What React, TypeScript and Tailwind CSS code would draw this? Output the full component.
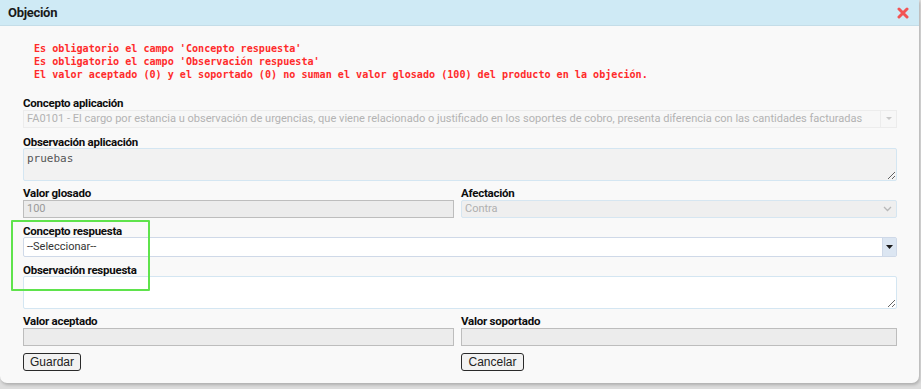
import React from 'react';

const errors = [
  "Es obligatorio el campo 'Concepto respuesta'",
  "Es obligatorio el campo 'Observación respuesta'",
  'El valor aceptado (0) y el soportado (0) no suman el valor glosado (100) del producto en la objeción.',
];

function Label({ children }: { children: React.ReactNode }) {
  return (
    <div className="h-[12px] text-[11.5px] leading-[12px] font-bold text-[#0d0d0d] tracking-[-0.25px]">{children}</div>
  );
}

function GreyInput({ value }: { value?: string }) {
  return (
    <div className="h-[18px] mt-[1px] bg-[#ececec] border border-[#bdbdbd] px-[3px] text-[11px] leading-[16px] text-[#9a9a9a]">
      {value}
    </div>
  );
}

function Button({ children, width }: { children: React.ReactNode; width: string }) {
  return (
    <button
      className={`${width} h-[18px] mt-[7px] border-[1.5px] border-[#2a2a2a] rounded-[3px] bg-[#f2f2f2] text-[12px] leading-[14px] text-[#222] font-['Liberation_Sans',Arial,sans-serif]`}
    >
      {children}
    </button>
  );
}

export default function App() {
  return (
    <div className="w-[921px] h-[389px] bg-[#dcdcdc] overflow-hidden font-['Roboto',sans-serif]">
      <div className="relative w-[919px] h-[383px] bg-[#f9f9f9] rounded-b-[7px] shadow-[1px_2px_3px_rgba(0,0,0,0.2)]">
        {/* header */}
        <div className="h-[26px] bg-[#cfeaf5] flex items-center justify-between pl-[8px] pr-[10px] border-b border-[#c4dde8]">
          <span className="text-[13px] font-bold text-[#1a1a1a] tracking-[-0.3px]">Objeción</span>
          <svg width="12" height="12" viewBox="0 0 12 12">
            <path d="M2 2 L10 10 M10 2 L2 10" stroke="#f25555" strokeWidth="3" strokeLinecap="round" />
          </svg>
        </div>

        {/* errors */}
        <div className="pl-[34px] pt-[16px] font-['DejaVu_Sans_Mono',monospace] text-[10.1px] leading-[13px] font-bold text-[#ff2b2b]">
          {errors.map((e) => (
            <div key={e} className="whitespace-pre">{e}</div>
          ))}
        </div>

        {/* form */}
        <div className="pl-[23px] pr-[22px] pt-[16px]">
          <Label>Concepto aplicación</Label>
          <div className="h-[18px] mt-[1px] flex bg-[#f7f7f7] border border-[#ececec]">
            <div className="flex-1 px-[3px] text-[11.05px] leading-[16px] text-[#b3b3b3] whitespace-nowrap overflow-hidden">
              FA0101 - El cargo por estancia u observación de urgencias, que viene relacionado o justificado en los soportes de cobro, presenta diferencia con las cantidades facturadas
            </div>
            <div className="w-[16px] border-l border-[#ececec] flex items-center justify-center">
              <svg width="6" height="4" viewBox="0 0 6 4">
                <path d="M0 0 L6 0 L3 3 Z" fill="#c8c8c8" />
              </svg>
            </div>
          </div>

          <div className="mt-[8px]">
            <Label>Observación aplicación</Label>
          </div>
          <textarea
            readOnly
            value="pruebas"
            className="block w-full h-[33px] bg-[#f2f2f2] border border-[#d4e6f2] rounded-[2px] px-[3px] py-[3px] font-['DejaVu_Sans_Mono',monospace] text-[11px] leading-[13px] text-[#555] outline-none"
          />

          <div className="grid grid-cols-[431px_436px] gap-x-[7px] mt-[6px]">
            <div>
              <Label>Valor glosado</Label>
              <GreyInput value="100" />
            </div>
            <div>
              <Label>Afectación</Label>
              <div className="h-[18px] mt-[1px] flex items-center justify-between bg-[#efefef] border border-[#d6e6f1] rounded-[2px] pl-[3px] pr-[4px] text-[11px] text-[#b0b0b0]">
                <span>Contra</span>
                <svg width="9" height="6" viewBox="0 0 9 6">
                  <path d="M1 1 L4.5 4.5 L8 1" stroke="#b8b8b8" strokeWidth="1.3" fill="none" />
                </svg>
              </div>
            </div>
          </div>

          <div className="mt-[7px]">
            <Label>Concepto respuesta</Label>
          </div>
          <div className="h-[20px] flex bg-white border border-[#cfd9e8] rounded-[2px]">
            <div className="flex-1 px-[3px] text-[11px] leading-[18px] text-[#333]">--Seleccionar--</div>
            <div className="w-[14px] bg-[#dce6f2] border-l border-[#cfd9e8] flex items-center justify-center">
              <svg width="7" height="4" viewBox="0 0 7 4">
                <path d="M0 0 L7 0 L3.5 4 Z" fill="#1a1a1a" />
              </svg>
            </div>
          </div>

          <div className="mt-[7px]">
            <Label>Observación respuesta</Label>
          </div>
          <textarea
            readOnly
            value=""
            className="block w-full h-[33px] bg-white border border-[#d4e6f2] rounded-[2px] px-[3px] py-[3px] text-[11px] outline-none"
          />

          <div className="grid grid-cols-[431px_436px] gap-x-[7px] mt-[6px]">
            <div>
              <Label>Valor aceptado</Label>
              <GreyInput />
              <Button width="w-[58px]">Guardar</Button>
            </div>
            <div>
              <Label>Valor soportado</Label>
              <GreyInput />
              <Button width="w-[63px]">Cancelar</Button>
            </div>
          </div>
        </div>

        {/* highlight annotation */}
        <div className="absolute left-[11px] top-[220px] w-[139px] h-[71px] border-2 border-[#5fe34c] rounded-[1px] pointer-events-none" />
      </div>
    </div>
  );
}
